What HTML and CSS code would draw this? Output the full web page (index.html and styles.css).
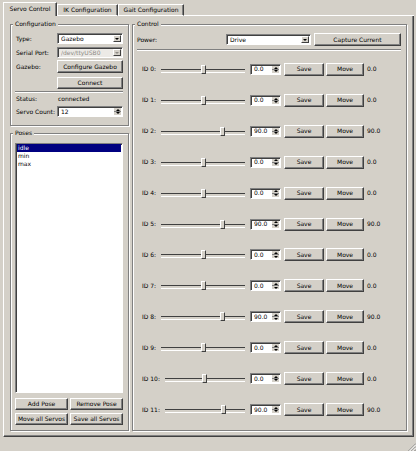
FILE: index.html
```html
<!DOCTYPE html>
<html>
<head>
<meta charset="utf-8">
<title>Servo Control</title>
<link rel="stylesheet" href="styles.css">
</head>
<body>
<div class="window">
  <div class="tabbar">
    <div class="tab tab-sel">Servo Control</div>
    <div class="tab tab-ik">IK Configuration</div>
    <div class="tab tab-gait">Gait Configuration</div>
    <div class="tabfill"></div>
  </div>
  <div class="pane">
    <div class="leftcol">
      <div class="group config">
        <div class="gtitle">Configuration</div>
        <div class="crow r-type"><span class="lbl">Type:</span><div class="combo cfield"><span class="ctext">Gazebo</span><span class="drop"></span></div></div>
        <div class="crow r-port"><span class="lbl">Serial Port:</span><div class="combo cfield dis"><span class="ctext">/dev/ttyUSB0</span><span class="drop"></span></div></div>
        <div class="crow r-gaz"><span class="lbl">Gazebo:</span><div class="btn cfield bt13">Configure Gazebo</div></div>
        <div class="crow r-con"><span class="lbl"></span><div class="btn cfield bt12">Connect</div></div>
        <div class="sep r-sep"></div>
        <div class="crow r-stat"><span class="lbl">Status:</span><span class="stat">connected</span></div>
        <div class="crow r-cnt"><span class="lbl">Servo Count:</span><div class="spin cfield"><span class="stext">12</span><span class="arrows"></span></div></div>
      </div>
      <div class="group poses">
        <div class="gtitle">Poses</div>
        <div class="list">
          <div class="item sel">idle</div>
          <div class="item">min</div>
          <div class="item">max</div>
        </div>
        <div class="pbtns r-pb1">
          <div class="btn">Add Pose</div>
          <div class="btn">Remove Pose</div>
        </div>
        <div class="pbtns r-pb2">
          <div class="btn">Move all Servos</div>
          <div class="btn">Save all Servos</div>
        </div>
      </div>
    </div>
    <div class="group control">
      <div class="gtitle">Control</div>
      <div class="prow">
        <span class="plbl">Power:</span>
        <div class="combo pcombo"><span class="ctext">Drive</span><span class="drop"></span></div>
        <div class="btn capture">Capture Current</div>
      </div>
      <div class="sep c-sep"></div>
      <div class="rows">
        <div class="srow"><span class="idl">ID 0:</span><div class="slider"><span class="handle" style="--p:0.5"></span></div><div class="spin sv"><span class="stext">0.0</span><span class="arrows"></span></div><div class="btn save">Save</div><div class="btn move">Move</div><span class="val">0.0</span></div>
        <div class="srow"><span class="idl">ID 1:</span><div class="slider"><span class="handle" style="--p:0.5"></span></div><div class="spin sv"><span class="stext">0.0</span><span class="arrows"></span></div><div class="btn save">Save</div><div class="btn move">Move</div><span class="val">0.0</span></div>
        <div class="srow"><span class="idl">ID 2:</span><div class="slider"><span class="handle" style="--p:0.75"></span></div><div class="spin sv"><span class="stext">90.0</span><span class="arrows"></span></div><div class="btn save">Save</div><div class="btn move">Move</div><span class="val">90.0</span></div>
        <div class="srow"><span class="idl">ID 3:</span><div class="slider"><span class="handle" style="--p:0.5"></span></div><div class="spin sv"><span class="stext">0.0</span><span class="arrows"></span></div><div class="btn save">Save</div><div class="btn move">Move</div><span class="val">0.0</span></div>
        <div class="srow"><span class="idl">ID 4:</span><div class="slider"><span class="handle" style="--p:0.5"></span></div><div class="spin sv"><span class="stext">0.0</span><span class="arrows"></span></div><div class="btn save">Save</div><div class="btn move">Move</div><span class="val">0.0</span></div>
        <div class="srow"><span class="idl">ID 5:</span><div class="slider"><span class="handle" style="--p:0.75"></span></div><div class="spin sv"><span class="stext">90.0</span><span class="arrows"></span></div><div class="btn save">Save</div><div class="btn move">Move</div><span class="val">90.0</span></div>
        <div class="srow"><span class="idl">ID 6:</span><div class="slider"><span class="handle" style="--p:0.5"></span></div><div class="spin sv"><span class="stext">0.0</span><span class="arrows"></span></div><div class="btn save">Save</div><div class="btn move">Move</div><span class="val">0.0</span></div>
        <div class="srow"><span class="idl">ID 7:</span><div class="slider"><span class="handle" style="--p:0.5"></span></div><div class="spin sv"><span class="stext">0.0</span><span class="arrows"></span></div><div class="btn save">Save</div><div class="btn move">Move</div><span class="val">0.0</span></div>
        <div class="srow"><span class="idl">ID 8:</span><div class="slider"><span class="handle" style="--p:0.75"></span></div><div class="spin sv"><span class="stext">90.0</span><span class="arrows"></span></div><div class="btn save">Save</div><div class="btn move">Move</div><span class="val">90.0</span></div>
        <div class="srow"><span class="idl">ID 9:</span><div class="slider"><span class="handle" style="--p:0.5"></span></div><div class="spin sv"><span class="stext">0.0</span><span class="arrows"></span></div><div class="btn save">Save</div><div class="btn move">Move</div><span class="val">0.0</span></div>
        <div class="srow"><span class="idl">ID 10:</span><div class="slider"><span class="handle" style="--p:0.5"></span></div><div class="spin sv"><span class="stext">0.0</span><span class="arrows"></span></div><div class="btn save">Save</div><div class="btn move">Move</div><span class="val">0.0</span></div>
        <div class="srow"><span class="idl">ID 11:</span><div class="slider"><span class="handle" style="--p:0.75"></span></div><div class="spin sv"><span class="stext">90.0</span><span class="arrows"></span></div><div class="btn save">Save</div><div class="btn move">Move</div><span class="val">90.0</span></div>
      </div>
    </div>
  </div>
  <div class="foot">
    <svg class="grip" width="8" height="8" viewBox="0 0 8 8">
      <path d="M8 0.5 L0.5 8 M8 3.5 L3.5 8 M8 6.5 L6.5 8" stroke="#808080" stroke-width="1"/>
      <path d="M8 1.5 L1.5 8 M8 4.5 L4.5 8" stroke="#ffffff" stroke-width="1"/>
    </svg>
  </div>
</div>
</body>
</html>
```

FILE: styles.css
```css
* { box-sizing: border-box; }
html, body { margin: 0; padding: 0; }
body {
  width: 416px;
  height: 451px;
  overflow: hidden;
  background: #d4d0c8;
  color: #000;
  font-family: "DejaVu Sans", "Liberation Sans", sans-serif;
  font-size: 6px;
  line-height: 8px;
}
.window {
  height: 451px;
  display: flex;
  flex-direction: column;
  padding: 2px 2px 0 3px;
}

/* tabs */
.tabbar { display: flex; align-items: flex-end; height: 14px; flex: none; }
.tab {
  height: 12px;
  display: flex;
  align-items: center;
  justify-content: center;
  white-space: nowrap;
  border-top: 1px solid #fff;
  border-left: 1px solid #fff;
  border-right: 1px solid #404040;
  border-bottom: 1px solid #fff;
  box-shadow: inset -1px 0 #808080;
}
.tab-sel { height: 14px; width: 54px; border-bottom: 0; padding-bottom: 1px; }
.tab-ik { width: 61px; }
.tab-gait { width: 66px; }
.tabfill { flex: 1; height: 1px; background: #fff; }

.pane {
  flex: none;
  height: 421px;
  display: flex;
  gap: 3px;
  padding: 8px 6px 5px 6px;
  border-left: 1px solid #fff;
  border-right: 1px solid #404040;
  border-bottom: 1px solid #404040;
  box-shadow: inset -1px -1px #808080;
}

/* group boxes */
.group {
  display: flex;
  flex-direction: column;
  border: 1px solid #808080;
  box-shadow: 1px 1px 0 #fff, inset 1px 1px 0 #fff;
}
.gtitle {
  align-self: flex-start;
  height: 8px;
  line-height: 8px;
  margin: -5px 0 0 -2px;
  padding: 0 2px;
  background: #d4d0c8;
  white-space: nowrap;
}

.leftcol { width: 119px; flex: none; display: flex; flex-direction: column; }
.config { flex: none; padding: 0 5px 8px 4px; }
.poses { flex: 1; margin-top: 7px; padding: 0 5px 5px 4px; }
.control { flex: 1; padding: 0 5px 5px 4px; }

/* configuration rows */
.crow { display: flex; align-items: center; flex: none; }
.lbl { width: 42px; flex: none; padding-left: 1px; white-space: nowrap; }
.cfield { flex: 1; }
.r-type { margin-top: 5px; }
.r-port { margin-top: 3px; }
.r-gaz { margin-top: 2px; }
.r-con { margin-top: 4px; }
.r-sep { margin-top: 2px; }
.r-stat { margin-top: 2px; height: 8px; }
.r-cnt { margin-top: 3px; }
.stat { padding-left: 1px; }

.sep { flex: none; height: 2px; border-top: 1px solid #808080; border-bottom: 1px solid #fff; }

/* widgets */
.btn {
  display: flex;
  align-items: center;
  justify-content: center;
  white-space: nowrap;
  background: #d4d0c8;
  border: 1px solid;
  border-color: #fff #404040 #404040 #fff;
  box-shadow: inset -1px -1px #808080;
}
.bt13 { height: 13px; }
.bt12 { height: 12px; }

.combo {
  display: flex;
  align-items: center;
  height: 11px;
  background: #fff;
  border: 1px solid;
  border-color: #808080 #fff #fff #808080;
  box-shadow: inset 1px 1px #404040;
  padding: 1px 1px 1px 3px;
  white-space: nowrap;
}
.ctext { flex: 1; overflow: hidden; }
.drop {
  width: 8px;
  height: 100%;
  flex: none;
  display: flex;
  align-items: center;
  justify-content: center;
  background: #d4d0c8;
  border: 1px solid;
  border-color: #fff #404040 #404040 #fff;
}
.drop::after {
  content: "";
  border-left: 2px solid transparent;
  border-right: 2px solid transparent;
  border-top: 2px solid #000;
}
.combo.dis { background: #eceae6; color: #8e8b86; }
.combo.dis .drop::after { border-top-color: #8e8b86; }

.spin {
  display: flex;
  align-items: center;
  height: 11px;
  background: #fff;
  border: 1px solid;
  border-color: #808080 #fff #fff #808080;
  box-shadow: inset 1px 1px #404040;
  padding: 1px 1px 1px 3px;
  white-space: nowrap;
}
.stext { flex: 1; }
.arrows {
  width: 7px;
  height: 100%;
  flex: none;
  display: flex;
  flex-direction: column;
  align-items: center;
  justify-content: space-around;
  background: linear-gradient(#d4d0c8 3px, #808080 3px, #808080 4px, #d4d0c8 4px);
}
.arrows::before {
  content: "";
  border-left: 2px solid transparent;
  border-right: 2px solid transparent;
  border-bottom: 2px solid #000;
}
.arrows::after {
  content: "";
  border-left: 2px solid transparent;
  border-right: 2px solid transparent;
  border-top: 2px solid #000;
}

/* poses */
.list {
  flex: 1;
  margin-top: 6px;
  background: #fff;
  border: 1px solid;
  border-color: #808080 #fff #fff #808080;
  box-shadow: inset 1px 1px #404040;
  padding: 0 1px 0 1px;
}
.item { height: 8px; line-height: 8px; padding-left: 1px; }
.item.sel { background: #000080; color: #fff; }
.pbtns { flex: none; display: grid; grid-template-columns: 1fr 1fr; gap: 2px; }
.pbtns .btn { height: 12px; }
.r-pb1 { margin-top: 5px; }
.r-pb2 { margin-top: 3px; }

/* control */
.prow { flex: none; display: flex; align-items: center; height: 13px; margin-top: 5px; }
.plbl { flex: 1; }
.pcombo { width: 85px; margin-right: 3px; }
.capture { width: 87px; height: 13px; }
.c-sep { margin-top: 3px; }
.rows { flex: 1; display: flex; flex-direction: column; margin-top: 3px; }
.srow { flex: 1; display: flex; align-items: center; padding-left: 5px; }
.idl { white-space: nowrap; }
.slider { flex: 1; position: relative; height: 9px; margin: 0 5px; }
.slider::before {
  content: "";
  position: absolute;
  left: 0;
  right: 0;
  top: 4px;
  height: 2px;
  border-top: 1px solid #404040;
  border-bottom: 1px solid #fff;
}
.handle {
  position: absolute;
  top: 0;
  width: 5px;
  height: 9px;
  left: calc(var(--p) * (100% - 5px));
  background: #d4d0c8;
  border: 1px solid;
  border-color: #fff #404040 #404040 #fff;
}
.sv { width: 31px; flex: none; }
.save { width: 40px; height: 13px; margin-left: 3px; flex: none; }
.move { width: 38px; height: 13px; margin-left: 2px; flex: none; }
.val { width: 35px; flex: none; margin-left: 2px; padding-left: 1px; white-space: nowrap; }

.foot { flex: 1; display: flex; justify-content: flex-end; align-items: flex-end; margin-right: -2px; }
.grip { display: block; }
```
